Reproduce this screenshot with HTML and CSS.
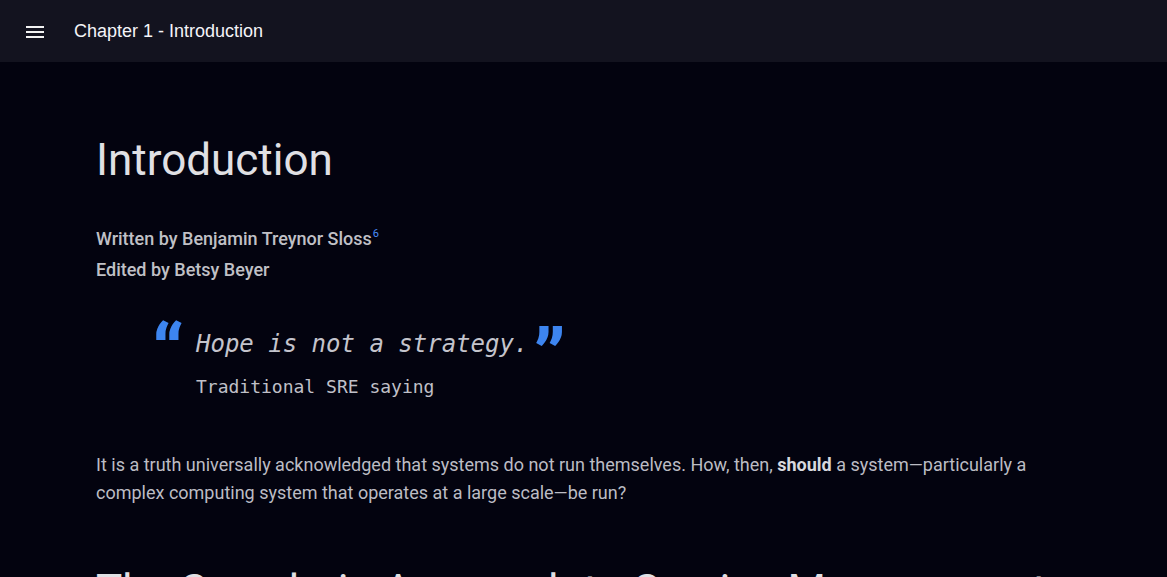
FILE: index.html
```html
<!DOCTYPE html>
<html lang="en">
<head>
<meta charset="utf-8">
<title>Chapter 1 - Introduction</title>
<link rel="stylesheet" href="styles.css">
</head>
<body>
<header class="topbar">
  <button class="menu-btn" aria-label="Menu">
    <svg width="18" height="14" viewBox="0 0 18 14"><rect x="0" y="1" width="18" height="2" fill="#f2f2f2"/><rect x="0" y="6" width="18" height="2" fill="#f2f2f2"/><rect x="0" y="11" width="18" height="2" fill="#f2f2f2"/></svg>
  </button>
  <div class="topbar-title">Chapter 1 - Introduction</div>
</header>
<main class="content">
  <h1 class="chapter-title">Introduction</h1>
  <div class="byline">
    <p>Written by Benjamin Treynor Sloss<sup class="fn">6</sup></p>
    <p>Edited by Betsy Beyer</p>
  </div>
  <blockquote class="epigraph">
    <p class="quote"><span class="q-open">“</span>Hope is not a strategy.<span class="q-close">”</span></p>
    <p class="attrib">Traditional SRE saying</p>
  </blockquote>
  <p class="para">It is a truth universally acknowledged that systems do not run themselves. How, then, <strong>should</strong> a system—particularly a complex computing system that operates at a large scale—be run?</p>
  <h2 class="section-title">The Sysadmin Approach to Service Management</h2>
</main>
</body>
</html>
```
FILE: styles.css
```css
html, body {
  margin: 0;
  padding: 0;
}
body {
  background: #03030f;
  font-family: Roboto, "Noto Sans", sans-serif;
  color: #c4c4cc;
  overflow: hidden;
}
.topbar {
  height: 62px;
  background: #13131f;
  display: flex;
  align-items: center;
  padding-left: 26px;
  box-sizing: border-box;
}
.menu-btn {
  background: none;
  border: 0;
  padding: 0;
  margin: 0;
  width: 18px;
  height: 14px;
  display: flex;
  margin-top: 2px;
}
.topbar-title {
  margin-left: 30px;
  font-family: "Liberation Sans", Arial, sans-serif;
  font-size: 18px;
  color: #f4f4f8;
}
.content {
  padding: 0 96px;
}
.chapter-title {
  margin: 70px 0 0;
  font-size: 44px;
  font-weight: 400;
  line-height: 56px;
  color: #e0e0e4;
}
.byline {
  margin-top: 35px;
}
.byline p {
  margin: 0;
  font-size: 18px;
  font-weight: 500;
  line-height: 31px;
  color: #c0c0c6;
}
.fn {
  color: #4a8cf8;
  font-size: 11px;
  font-weight: 400;
  vertical-align: 8px;
  line-height: 0;
  margin-left: 1px;
}
.epigraph {
  margin: 44px 0 0 100px;
}
.quote {
  position: relative;
  margin: 0;
  font-family: "DejaVu Sans Mono", monospace;
  font-style: italic;
  font-size: 24px;
  line-height: 30px;
  color: #c4c4cc;
}
.q-open {
  position: absolute;
  left: -44px;
  top: -6px;
  font-family: Roboto, sans-serif;
  font-style: normal;
  font-weight: 900;
  font-size: 76px;
  line-height: 60px;
  color: #3d85f0;
}
.q-close {
  font-family: Roboto, sans-serif;
  font-style: normal;
  font-weight: 900;
  font-size: 76px;
  line-height: 0;
  color: #3d85f0;
  vertical-align: -31px;
  margin-left: 5px;
}
.attrib {
  margin: 15px 0 0;
  font-family: "DejaVu Sans Mono", monospace;
  font-size: 18px;
  line-height: 26px;
  color: #c0c0c8;
}
.para {
  margin: 51px 0 0;
  font-size: 18px;
  line-height: 28px;
  color: #bcbcc4;
  max-width: 975px;
}
.para strong {
  color: #d8d8de;
}
.section-title {
  margin: 56px 0 0;
  font-size: 44px;
  font-weight: 400;
  line-height: 56px;
  color: #e0e0e4;
}
```
